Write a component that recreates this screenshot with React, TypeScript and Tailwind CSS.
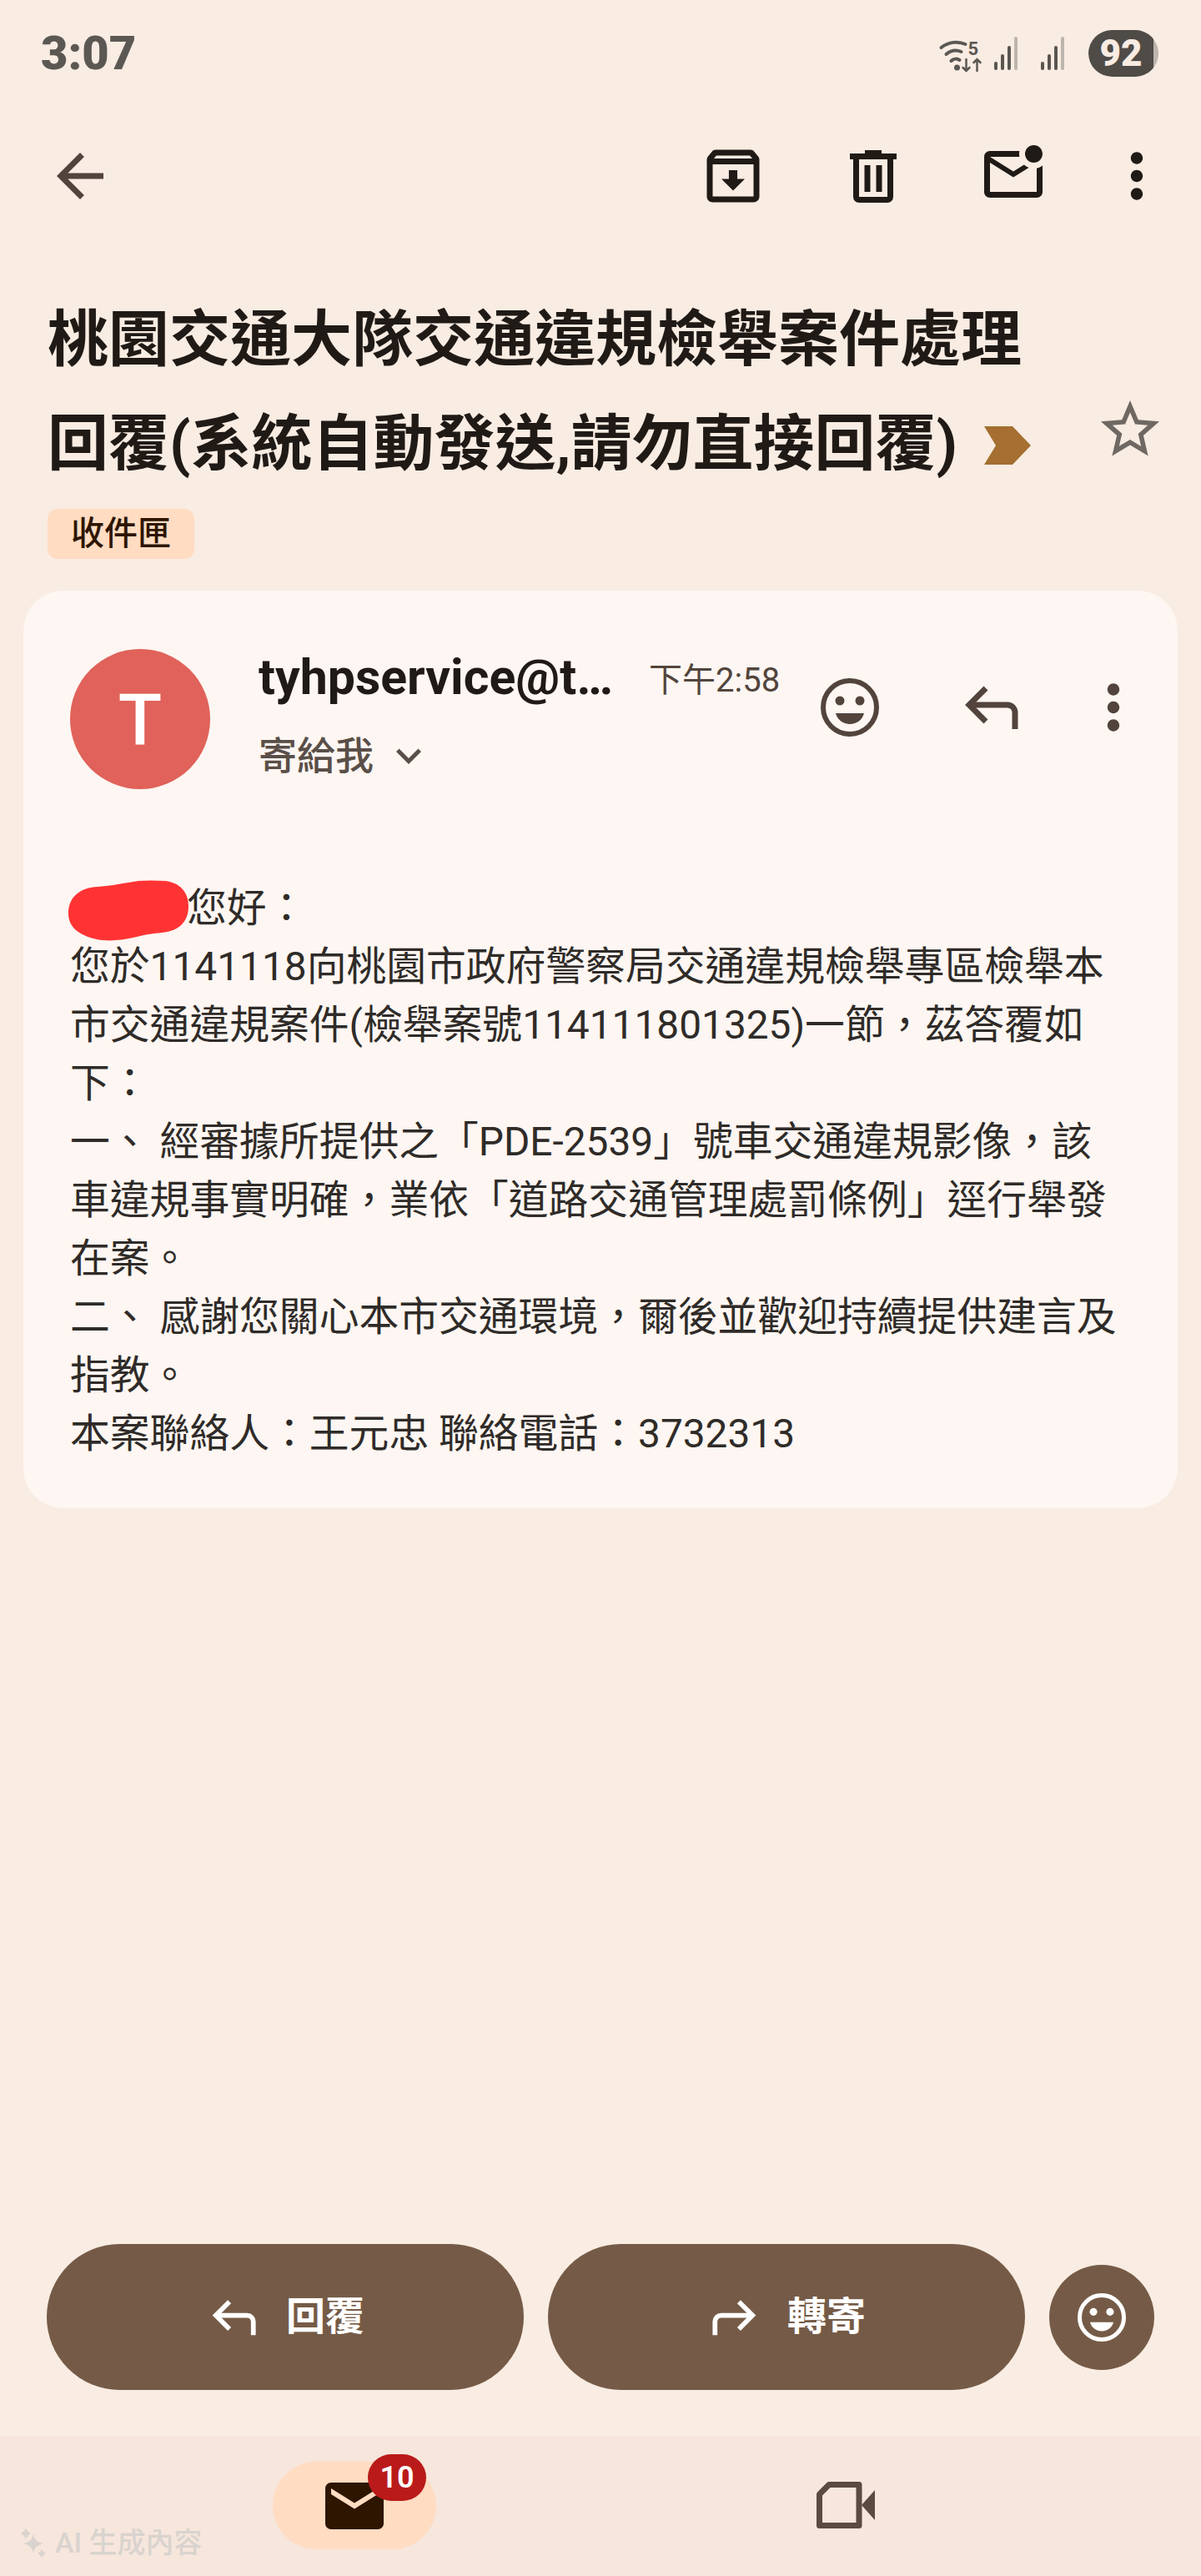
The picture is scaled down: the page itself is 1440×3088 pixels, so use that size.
import { MdArrowBack, MdMoreVert, MdOutlineArchive, MdOutlineMarkEmailUnread, MdStarBorder, MdKeyboardArrowDown, MdMail } from 'react-icons/md';

const cjk = "font-['Roboto','Noto_Sans_CJK_TC',sans-serif]";

const ReplyIcon = ({ flip = false, className = '' }: { flip?: boolean; className?: string }) => (
  <svg viewBox="0 0 66 56" className={`${className} ${flip ? '-scale-x-100' : ''}`} fill="none" stroke="currentColor" strokeWidth="7">
    <path d="M27 5 7 25l20 20" />
    <path d="M7 25h46a9 9 0 0 1 9 9v20" />
  </svg>
);

const SmileIcon = ({ className = '' }: { className?: string }) => (
  <svg viewBox="0 0 70 70" className={className}>
    <circle cx="35" cy="35" r="32" fill="none" stroke="currentColor" strokeWidth="6" />
    <circle cx="23" cy="27" r="5.5" fill="currentColor" />
    <circle cx="47" cy="27" r="5.5" fill="currentColor" />
    <path d="M18 42h34c-2 8-9 13-17 13s-15-5-17-13z" fill="currentColor" />
  </svg>
);

const TrashIcon = ({ className = '' }: { className?: string }) => (
  <svg viewBox="0 0 56 63" className={className} fill="currentColor">
    <rect x="18" y="0" width="20" height="5" />
    <rect x="0" y="4" width="56" height="7" />
    <path d="M7.500 11v45a3.500 3.500 0 0 0 3.500 3.500h34a3.500 3.500 0 0 0 3.500-3.500V11" fill="none" stroke="currentColor" strokeWidth="7" />
    <rect x="17.500" y="18" width="7" height="32" />
    <rect x="31.500" y="18" width="7" height="32" />
  </svg>
);

const SignalBars = () => (
  <svg viewBox="0 0 36 40" className="w-[36px] h-[40px]">
    <rect x="0" y="30" width="4" height="10" rx="2" fill="#5b5550" />
    <rect x="8" y="21" width="4" height="19" rx="2" fill="#5b5550" />
    <rect x="16" y="11" width="4" height="29" rx="2" fill="#5b5550" />
    <rect x="24" y="0" width="4" height="40" rx="2" fill="#bdb5ad" />
  </svg>
);

const StatusBar = () => (
  <div className="h-[120px] pl-[49px] pr-[51px] pt-[36px] flex justify-between items-start text-[#5b5854]">
    <span className="text-[56px] leading-[56px] font-black font-['Roboto',sans-serif]">3:07</span>
    <div className="flex items-center">
      <svg viewBox="0 0 54 42" className="w-[55px] h-[42px] mt-[4px] overflow-visible" fill="none" stroke="#5b5854" strokeWidth="4" strokeLinecap="round">
        <path d="M3 12c9-7 20-8 29-4" />
        <path d="M9 20c6-5 13-5 18-3" />
        <path d="M15 28c3-3 7-3 10-1" />
        <circle cx="22" cy="36" r="1.5" fill="#5b5854" />
        <path d="M33 26v14m-4-4 4 4 4-4M46 40V26m-4 4 4-4 4 4" strokeWidth="2.5" />
        <text x="35" y="21" fontSize="22" fontWeight="700" fill="#5b5854" stroke="none" fontFamily="Roboto">5</text>
      </svg>
      <div className="ml-[12px] flex gap-[20px]">
        <SignalBars />
        <SignalBars />
      </div>
      <div className="ml-[21px] w-[84px] h-[56px] rounded-full bg-[#bdb5ad] overflow-hidden">
        <div className="w-[78px] h-[56px] bg-[#4f4b47] rounded-l-full flex items-center justify-center text-[#f9ece2] text-[44px] font-black font-['Roboto',sans-serif]">92</div>
      </div>
    </div>
  </div>
);

const Toolbar = () => (
  <div className="h-[92px] mt-[45px] flex items-center pl-[54px] pr-[34px] text-[#201a17]">
    <MdArrowBack className="w-[84px] h-[84px] text-[#52443c]" />
    <div className="ml-auto flex items-center">
      <MdOutlineArchive className="w-[84px] h-[84px]" />
      <TrashIcon className="w-[56px] h-[63px] ml-[98px]" />
      <MdOutlineMarkEmailUnread className="w-[84px] h-[84px] ml-[98px] -mt-[5px]" />
      <MdMoreVert className="w-[86px] h-[86px] ml-[63px]" />
    </div>
  </div>
);

const Header = () => (
  <div className="px-[57px] pt-[88px] relative">
    <h1 className={`${cjk} text-[73px] leading-[125px] font-bold text-[#201a17]`}>
      桃園交通大隊交通違規檢舉案件處理<br />
      回覆(系統自動發送,請勿直接回覆)
      <svg viewBox="0 0 60 50" className="inline-block w-[60px] h-[50px] ml-[30px] -mt-[8px]">
        <path d="M2 2h34l22 23-22 23H2l14-23z" fill="#a46f30" />
      </svg>
    </h1>
    <MdStarBorder className="absolute right-[43px] top-[216px] w-[84px] h-[84px] text-[#6f6862]" />
    <div className={`${cjk} mt-[15px] w-[176px] h-[60px] rounded-[12px] bg-[#ffdcc2] flex items-center justify-center text-[40px] font-medium text-[#2e1500]`}>收件匣</div>
  </div>
);

const Message = () => (
  <div className="mx-[28px] mt-[38px] h-[1100px] rounded-[48px] bg-[#fdf6f2] flex flex-col">
    <div className="flex items-start pt-[70px] pl-[56px] pr-[34px]">
      <div className="w-[168px] h-[168px] rounded-full bg-[#e0625a] flex items-center justify-center text-white text-[86px] font-medium font-['Roboto',sans-serif]">T</div>
      <div className="ml-[58px] w-[468px] text-[#201a17]">
        <div className={`${cjk} text-[59px] leading-[68px] font-bold whitespace-nowrap`}>tyhpservice@t…</div>
        <div className={`${cjk} mt-[30px] flex items-center text-[46px] leading-[60px] text-[#5a4f48] font-medium`}>
          寄給我
          <MdKeyboardArrowDown className="ml-[12px] w-[60px] h-[60px]" />
        </div>
      </div>
      <span className={`${cjk} text-[40px] leading-[56px] mt-[10px] text-[#52443c] whitespace-nowrap`}>下午2:58</span>
      <div className="ml-auto flex items-center mt-[27px] text-[#52443c]">
        <SmileIcon className="w-[70px] h-[70px]" />
        <ReplyIcon className="w-[66px] h-[56px] ml-[101px]" />
        <MdMoreVert className="w-[86px] h-[86px] ml-[71px]" />
      </div>
    </div>
    <div className={`${cjk} mt-[108px] pl-[56px] pr-[66px] text-[47.8px] leading-[70px] text-[#2f2b28] relative`}>
      <svg viewBox="0 0 144 74" className="absolute left-[54px] top-[1px] w-[144px] h-[74px]">
        <path d="M0 40C0 20 14 9 36 8 50 7 58 5 72 3 84 0 100 0 116 1c18 2 28 14 28 30 0 18-10 30-32 32-10 1-18 2-30 5-16 4-34 6-48 3C12 66 0 56 0 40z" fill="#ff3333" />
      </svg>
      <p className="pl-[140px]">您好：</p>
      <p>您於1141118向桃園市政府警察局交通違規檢舉專區檢舉本市交通違規案件(檢舉案號114111801325)一節，茲答覆如下：</p>
      <p>一、 經審據所提供之「PDE-2539」號車交通違規影像，該車違規事實明確，業依「道路交通管理處罰條例」逕行舉發在案。</p>
      <p>二、 感謝您關心本市交通環境，爾後並歡迎持續提供建言及指教。</p>
      <p>本案聯絡人：王元忠 聯絡電話：3732313</p>
    </div>
  </div>
);

const Actions = () => (
  <div className="flex items-center gap-[29px] pl-[56px] pr-[56px] mb-[55px] text-white">
    <button className="w-[572px] h-[175px] pl-[6px] rounded-full bg-[#755b47] flex items-center justify-center gap-[36px]">
      <ReplyIcon className="w-[54px] h-[46px]" />
      <span className={`${cjk} text-[47px] font-bold`}>回覆</span>
    </button>
    <button className="w-[572px] h-[175px] pl-[6px] rounded-full bg-[#755b47] flex items-center justify-center gap-[36px]">
      <ReplyIcon flip className="w-[54px] h-[46px]" />
      <span className={`${cjk} text-[47px] font-bold`}>轉寄</span>
    </button>
    <button className="w-[126px] h-[126px] rounded-full bg-[#755b47] flex items-center justify-center">
      <SmileIcon className="w-[58px] h-[58px]" />
    </button>
  </div>
);

const BottomNav = () => (
  <div className="h-[168px] bg-[#f6e6dc] relative flex pt-[31px]">
    <div className="ml-[327px] w-[196px] h-[105px] rounded-full bg-[#ffdcc2] relative flex items-center justify-center">
      <MdMail className="w-[84px] h-[84px] text-[#2e1500]" />
      <span className="absolute left-[114px] -top-[9px] w-[70px] h-[56px] rounded-full bg-[#ba1a1a] flex items-center justify-center text-white text-[36px] font-semibold font-['Roboto',sans-serif]">10</span>
    </div>
    <svg viewBox="0 0 70 56" className="ml-[456px] mt-[24px] w-[70px] h-[56px] text-[#5a4a40]">
      <path d="M15 3.500h36v49H3.500V15z" fill="none" stroke="currentColor" strokeWidth="7" strokeLinejoin="round" />
      <path d="M54 28 70 10v36z" fill="currentColor" />
    </svg>
    <div className={`${cjk} absolute left-[24px] bottom-[20px] flex items-center gap-[10px] text-[34px] leading-[40px] font-medium text-[#d9d3ce]`}>
      <svg viewBox="0 0 32 35" className="w-[32px] h-[35px]" fill="currentColor">
        <path d="M16 6c1 7 4 11 13 12-9 1-12 6-13 12-1-6-4-11-13-12 9-1 12-5 13-12z" />
        <path d="M7 0l2.500 3.500L13 6 9.500 8.500 7 12 4.500 8.500 1 6l3.500-2.500z" />
        <path d="M26 25l2 3 3 2-3 2-2 3-2-3-3-2 3-2z" />
      </svg>
      AI 生成內容
    </div>
  </div>
);

export default function App() {
  return (
    <div className="w-[1440px] h-[3088px] bg-[#f9ece2] flex flex-col overflow-hidden">
      <StatusBar />
      <Toolbar />
      <Header />
      <Message />
      <div className="flex-1" />
      <Actions />
      <BottomNav />
    </div>
  );
}
